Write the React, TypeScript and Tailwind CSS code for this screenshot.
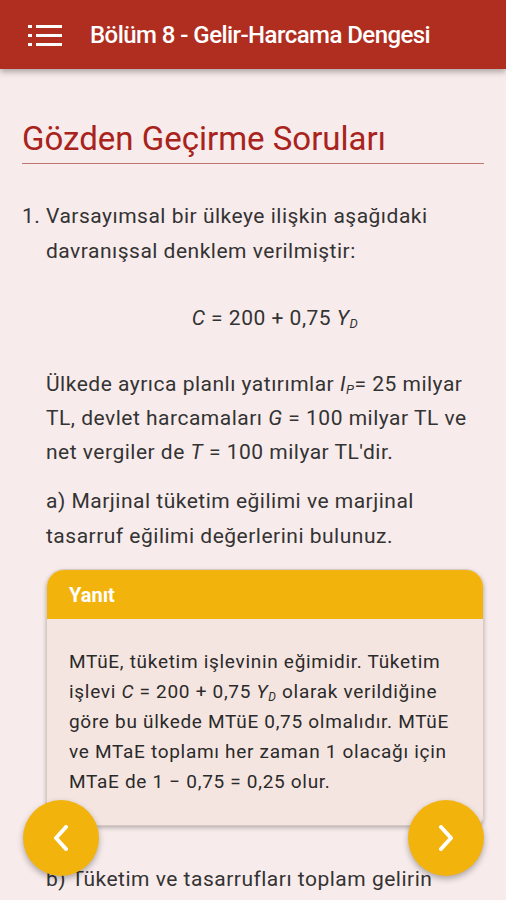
const MenuIcon = () => (
  <svg width="36" height="24" viewBox="0 0 36 24" className="text-white">
    <rect x="0" y="2" width="4" height="3" fill="currentColor" />
    <rect x="0" y="11" width="4" height="3" fill="currentColor" />
    <rect x="0" y="20" width="4" height="3" fill="currentColor" />
    <rect x="8" y="2" width="26" height="3" fill="currentColor" />
    <rect x="8" y="11" width="26" height="3" fill="currentColor" />
    <rect x="8" y="20" width="26" height="3" fill="currentColor" />
  </svg>
);

const Chevron = ({ dir }: { dir: "left" | "right" }) => (
  <svg width="18" height="26" viewBox="0 0 18 26" fill="none">
    <path
      d={dir === "left" ? "M14 2 L4 13 L14 24" : "M4 2 L14 13 L4 24"}
      stroke="white"
      strokeWidth="4"
      strokeLinecap="round"
      strokeLinejoin="round"
    />
  </svg>
);

const App = () => {
  return (
    <div
      className="h-screen overflow-hidden bg-[#f8ebeb] relative"
      style={{ fontFamily: "Roboto, 'Liberation Sans', sans-serif" }}
    >
      {/* Toolbar */}
      <header className="h-[69px] bg-[#b02e1f] flex items-center shadow-[0_3px_6px_rgba(0,0,0,0.3)] relative z-10">
        <div className="pl-[28px] pr-[26px] flex items-center">
          <MenuIcon />
        </div>
        <h1 className="text-white text-[24px] font-medium tracking-[-0.55px]">
          Bölüm 8 - Gelir-Harcama Dengesi
        </h1>
      </header>

      <main className="px-[22px] text-[#333] text-[21px] tracking-[0.5px]">
        <h2 className="mt-[50px] text-[33px] leading-[40px] tracking-normal text-[#a8231b] pb-[4px] border-b border-[#c27672]">
          Gözden Geçirme Soruları
        </h2>

        <div className="mt-[35px] flex">
          <span className="w-[24px] leading-[35px]">1.</span>
          <div className="flex-1 whitespace-nowrap">
            <p className="leading-[35px]">
              Varsayımsal bir ülkeye ilişkin aşağıdaki
              <br />
              davranışsal denklem verilmiştir:
            </p>

            <p className="mt-[32px] leading-[35px] text-center pl-[20px]">
              <i>C</i> = 200 + 0,75 <i>Y</i>
              <sub className="italic text-[13px]">D</sub>
            </p>

            <p className="mt-[31px] leading-[34px]">
              Ülkede ayrıca planlı yatırımlar <i>I</i>
              <sub className="italic text-[13px]">P</sub>= 25 milyar
              <br />
              TL, devlet harcamaları <i>G</i> = 100 milyar TL ve
              <br />
              net vergiler de <i>T</i> = 100 milyar TL'dir.
            </p>

            <p className="mt-[15px] leading-[35px]">
              a) Marjinal tüketim eğilimi ve marjinal
              <br />
              tasarruf eğilimi değerlerini bulunuz.
            </p>

            {/* Answer card */}
            <div className="mt-[15px] rounded-t-[18px] rounded-b-[10px] overflow-hidden shadow-[0_2px_4px_rgba(0,0,0,0.25)] border border-[#d9c9c5]">
              <div className="h-[49px] bg-[#f2b30c] flex items-center px-[22px]">
                <span className="text-white font-bold text-[20px] tracking-normal">Yanıt</span>
              </div>
              <div className="bg-[#f5e5e1] px-[22px] pt-[28px] pb-[28px] text-[19px] leading-[30px] tracking-[0.7px] text-[#2a2a2a]">
                MTüE, tüketim işlevinin eğimidir. Tüketim
                <br />
                işlevi <i>C</i> = 200 + 0,75 <i>Y</i>
                <sub className="italic text-[12px]">D</sub> olarak verildiğine
                <br />
                göre bu ülkede MTüE 0,75 olmalıdır. MTüE
                <br />
                ve MTaE toplamı her zaman 1 olacağı için
                <br />
                MTaE de 1 − 0,75 = 0,25 olur.
              </div>
            </div>

            <p className="mt-[36px] leading-[35px]">b) Tüketim ve tasarrufları toplam gelirin</p>
          </div>
        </div>
      </main>

      {/* Navigation buttons */}
      <button className="absolute left-[23px] bottom-[24px] w-[76px] h-[76px] rounded-full bg-[#f2b30c] flex items-center justify-center shadow-[0_3px_6px_rgba(0,0,0,0.3)]">
        <Chevron dir="left" />
      </button>
      <button className="absolute right-[22px] bottom-[24px] w-[76px] h-[76px] rounded-full bg-[#f2b30c] flex items-center justify-center shadow-[0_3px_6px_rgba(0,0,0,0.3)]">
        <Chevron dir="right" />
      </button>
    </div>
  );
};

export default App;
